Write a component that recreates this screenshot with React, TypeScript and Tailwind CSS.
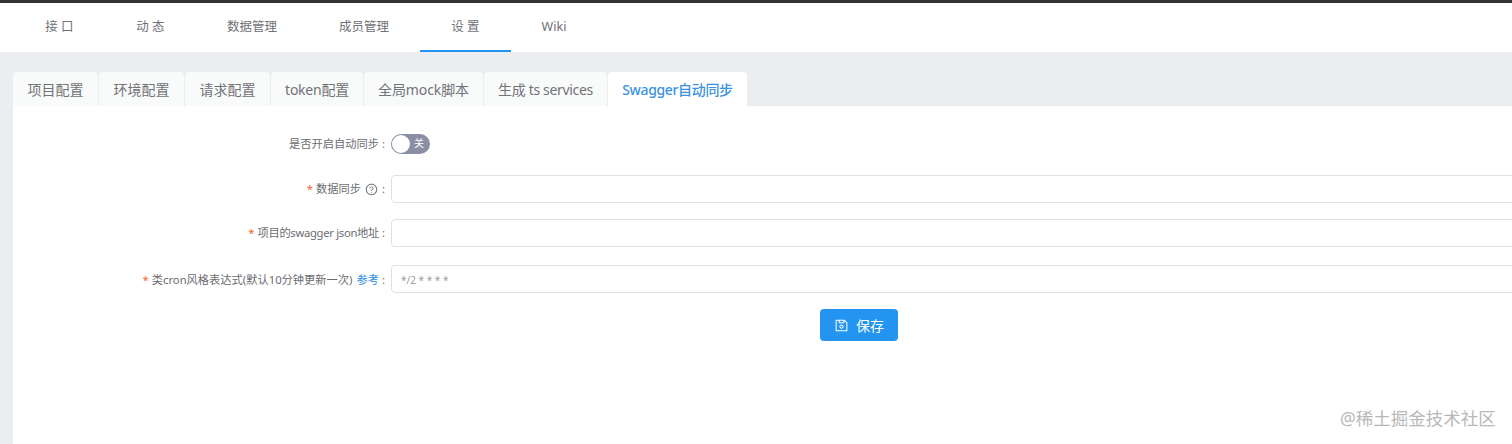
import React from "react";
import { AiOutlineQuestionCircle, AiOutlineSave } from "react-icons/ai";

const fontStack = "font-['Noto_Sans','Noto_Sans_CJK_SC',sans-serif]";

const navItems = [
  { label: "接 口", width: "w-[91px]" },
  { label: "动 态", width: "w-[91px]" },
  { label: "数据管理", width: "w-[112px]" },
  { label: "成员管理", width: "w-[112px]" },
  { label: "设 置", width: "w-[91px]", active: true },
  { label: "Wiki", width: "w-[86px]" },
];

const tabs = [
  { label: "项目配置", width: "w-[85px]" },
  { label: "环境配置", width: "w-[85px]" },
  { label: "请求配置", width: "w-[85px]" },
  { label: "token配置", width: "w-[92px]", tight: "tracking-[-0.25px]" },
  { label: "全局mock脚本", width: "w-[119px]", tight: "tracking-[-0.1px]" },
  { label: "生成 ts services", width: "w-[123px]", tight: "tracking-[-0.33px]" },
  { label: "Swagger自动同步", width: "w-[139px]", tight: "tracking-[-0.35px]", active: true },
];

const Label = ({
  children,
  required,
  className = "",
}: {
  children: React.ReactNode;
  required?: boolean;
  className?: string;
}) => (
  <div className={`flex items-center justify-end pr-[6px] pt-[1px] text-[11.25px] text-[#6b6d72] ${className}`}>
    {required && <span className="mr-[3px] text-[#f5622d]">*</span>}
    {children}
    <span className="ml-[3px]">:</span>
  </div>
);

const Input = ({ value, className = "" }: { value?: string; className?: string }) => (
  <div
    className={`flex h-[28px] w-[1140px] items-center rounded-[4px] border border-[#dfe1e5] bg-white px-[9px] pt-[2px] text-[10px] text-[#9a9ca0] ${className}`}
  >
    {value}
  </div>
);

export default function App() {
  return (
    <div className={`relative flex h-[444px] w-[1512px] flex-col overflow-hidden bg-[#ebedf0] ${fontStack}`}>
      <div className="h-[3px] bg-[#333333]" />

      <nav className="flex h-[49px] bg-white pl-[14px]">
        {navItems.map((item) => (
          <div
            key={item.label}
            className={`flex h-[49px] items-center justify-center border-b-2 pt-[2px] text-[12.5px] text-[#6f7176] ${item.width} ${
              item.active ? "border-[#2395f1]" : "border-transparent"
            }`}
          >
            {item.label}
          </div>
        ))}
      </nav>

      <div className="flex flex-1 flex-col pl-[13px] pt-[20px]">
        <div className="flex h-[34px] gap-[1px]">
          {tabs.map((tab) => (
            <div
              key={tab.label}
              className={`flex items-center justify-center rounded-t-[4px] text-[14px] ${tab.width} ${tab.tight ?? ""} ${
                tab.active ? "bg-white font-medium text-[#3a92e0]" : "bg-[#f9fafa] text-[#717378]"
              }`}
            >
              {tab.label}
            </div>
          ))}
        </div>

        <div className="flex flex-1 flex-col bg-white pt-[22px]">
          <div className="grid grid-cols-[378px_1fr] gap-y-[16px]">
            <Label>是否开启自动同步</Label>
            <div className="flex h-[31px] items-center">
              <div className="flex h-[20px] w-[39px] items-center justify-between rounded-full bg-[#8b8fa3] pl-[1px] pr-[6px]">
                <span className="h-[18px] w-[18px] rounded-full bg-white" />
                <span className="text-[10px] text-white">关</span>
              </div>
            </div>

            <Label required>
              数据同步
              <AiOutlineQuestionCircle className="ml-[4px] text-[13px] text-[#6a6c70]" />
              <span className="w-[1px]" />
            </Label>
            <Input />

            <Label required>
              <span className="tracking-[-0.3px]">项目的swagger json地址</span>
            </Label>
            <Input />

            <Label required className="mt-[2px] pt-[2px]">
              类cron风格表达式(默认10分钟更新一次)
              <span className="ml-[4px] text-[#2f8fe0]">参考</span>
            </Label>
            <Input value="*/2 * * * *" className="mt-[2px]" />
          </div>

          <div className="mt-[16px] flex pl-[807px]">
            <button className="flex h-[32px] w-[78px] items-center justify-center gap-[7px] rounded-[4px] bg-[#2395f1] text-[14px] text-white">
              <AiOutlineSave className="text-[15px]" />
              保存
            </button>
          </div>
        </div>
      </div>

      <div className="absolute left-[1340px] top-[406px] text-[17.5px] leading-[24px] text-[#b8b8b8]">@稀土掘金技术社区</div>
    </div>
  );
}
